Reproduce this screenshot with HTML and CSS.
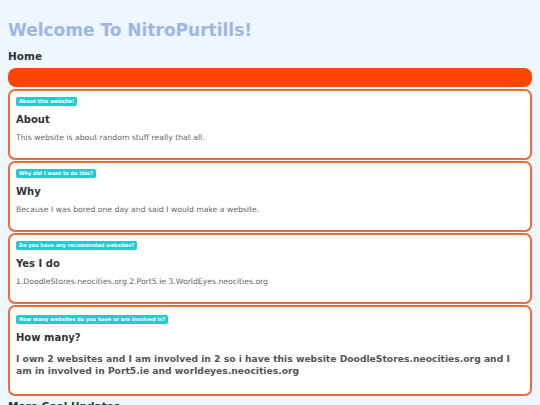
FILE: index.html
```html
<!DOCTYPE html>
<html>
<head>
<meta charset="utf-8">
<link rel="stylesheet" href="styles.css">
</head>
<body>
<h1 class="title">Welcome To NitroPurtills!</h1>
<h2 class="section">Home</h2>
<div class="bar"></div>
<div class="card">
  <span class="badge">About this website!</span>
  <h3 class="card-title">About</h3>
  <p class="card-text">This website is about random stuff really that all.</p>
</div>
<div class="card">
  <span class="badge">Why did I want to do this?</span>
  <h3 class="card-title">Why</h3>
  <p class="card-text">Because I was bored one day and said I would make a website.</p>
</div>
<div class="card">
  <span class="badge">Do you have any recommnded websites?</span>
  <h3 class="card-title">Yes I do</h3>
  <p class="card-text">1.DoodleStores.neocities.org 2.Port5.ie 3.WorldEyes.neocities.org</p>
</div>
<div class="card card-last">
  <span class="badge">How many websites do you have or are involved in?</span>
  <h3 class="card-title">How many?</h3>
  <p class="card-text strong">I own 2 websites and I am involved in 2 so i have this website DoodleStores.neocities.org and I am in involved in Port5.ie and worldeyes.neocities.org</p>
</div>
<h2 class="section section-bottom">More Cool Updates</h2>
</body>
</html>
```
FILE: styles.css
```css
html, body {
  margin: 0;
  padding: 0;
}
body {
  background: #eef6ff;
  font-family: "DejaVu Sans", Verdana, sans-serif;
  padding: 8px;
  color: #333;
}
.title {
  margin: 12px 0 0 0;
  font-size: 17px;
  line-height: 20px;
  color: #9db7e4;
  font-weight: bold;
}
.section {
  margin: 10px 0 5px 0;
  font-size: 10.5px;
  line-height: 13px;
  font-weight: bold;
  color: #333;
}
.section-bottom {
  margin-top: 4px;
}
.bar {
  height: 19px;
  background: #ff4500;
  border-radius: 8px;
  margin-bottom: 2px;
}
.card {
  background: #fff;
  border: 2px solid #ec6a3c;
  border-radius: 7px;
  padding: 6px 6px 15px 6px;
  margin-bottom: 1px;
}
.card-last {
  margin-top: 1px;
  padding-top: 8px;
  padding-bottom: 17px;
}
.badge {
  display: block;
  width: max-content;
  background: #1fccd2;
  color: #fff;
  font-size: 5px;
  font-weight: bold;
  line-height: 9px;
  padding: 0 3px;
  border-radius: 2px;
}
.card-title {
  margin: 7px 0 0 0;
  font-size: 10px;
  line-height: 13px;
  font-weight: bold;
  color: #333;
}
.card-text {
  margin: 6px 0 0 0;
  font-size: 7.7px;
  line-height: 11px;
  color: #666;
}
.card-text.strong {
  margin-top: 9px;
  font-size: 9.2px;
  font-weight: bold;
  line-height: 12px;
  color: #555;
}
```
